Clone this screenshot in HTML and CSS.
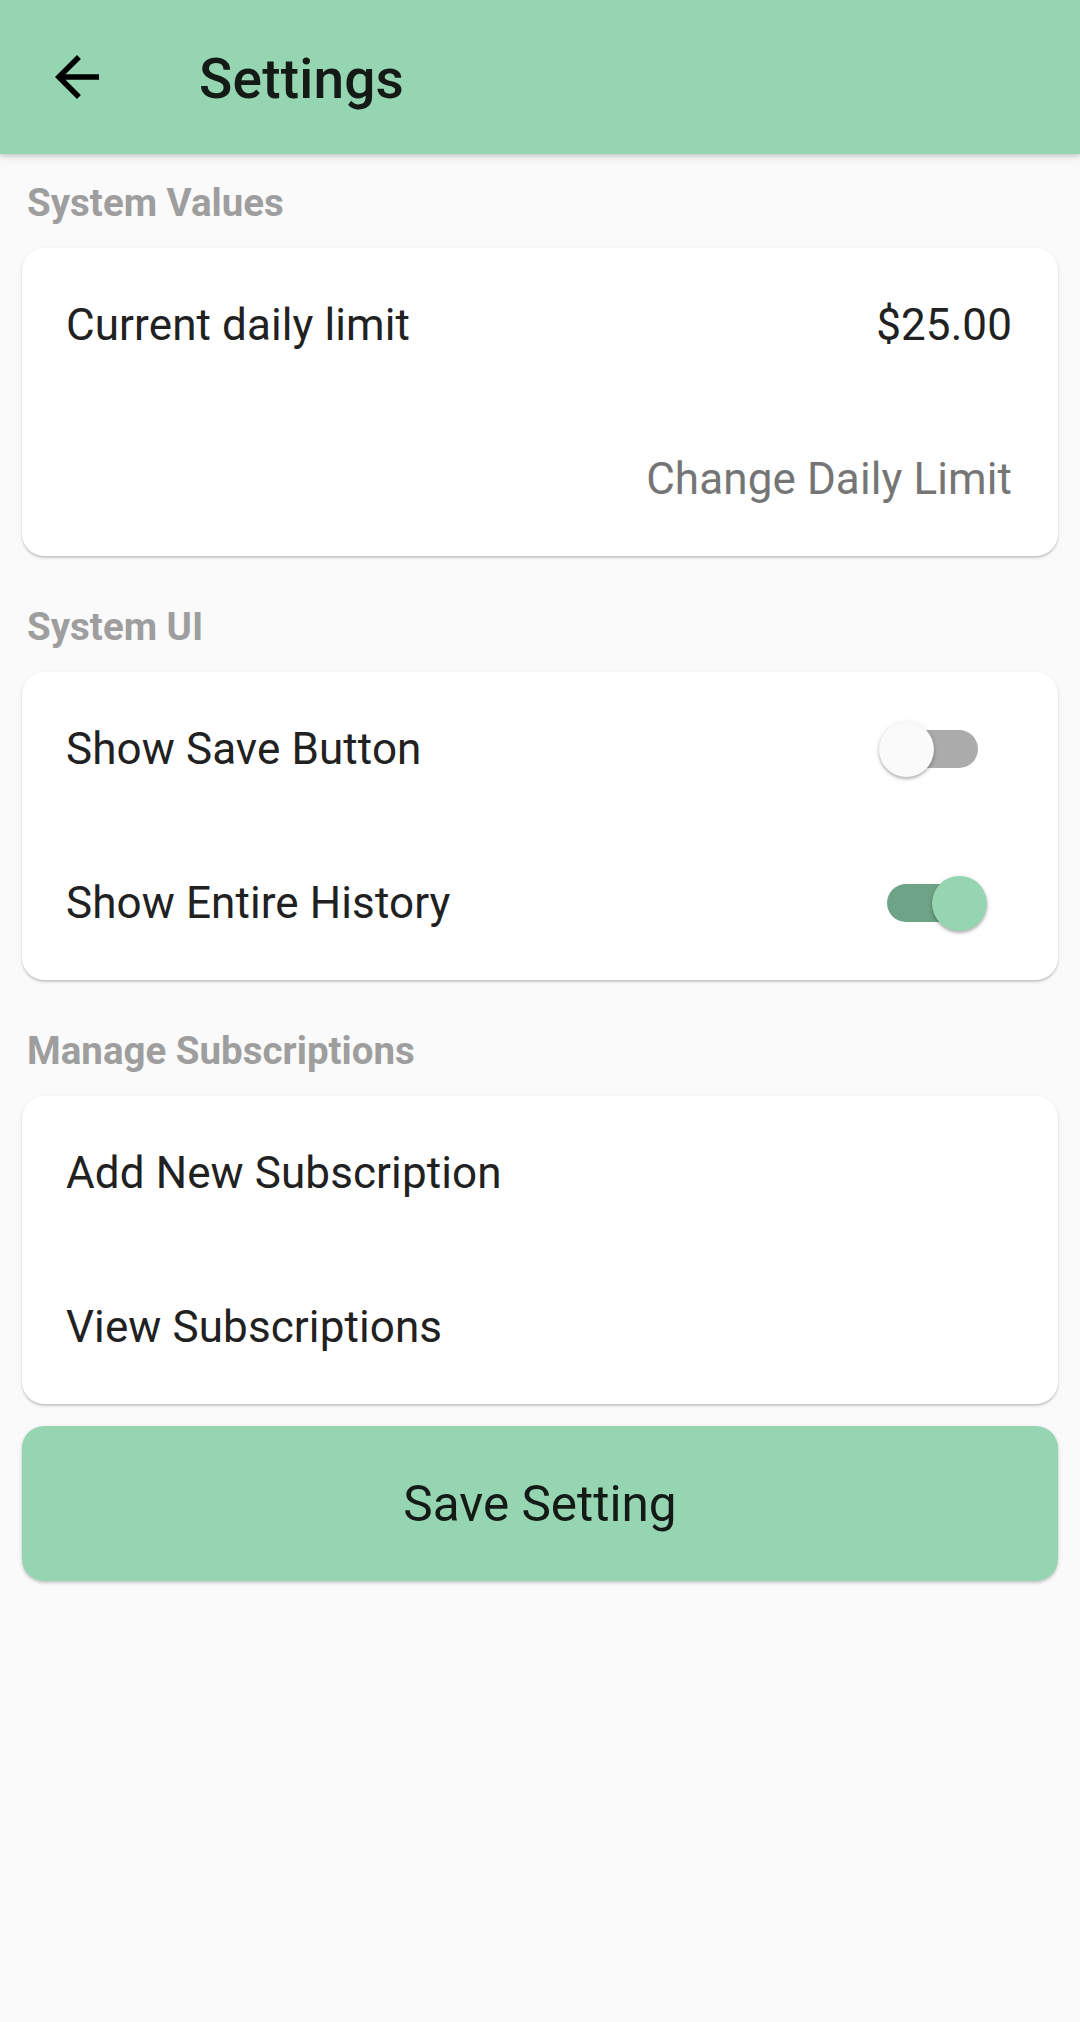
FILE: index.html
```html
<!DOCTYPE html>
<html lang="en">
<head>
<meta charset="utf-8">
<title>Settings</title>
<link rel="stylesheet" href="styles.css">
</head>
<body>
<header class="appbar">
  <div class="appbar-back">
    <svg class="icon-back" viewBox="0 0 24 24" width="66" height="66"><path d="M20 11H7.83l5.59-5.59L12 4l-8 8 8 8 1.41-1.41L7.83 13H20v-2z" fill="#000"/></svg>
  </div>
  <h1 class="appbar-title">Settings</h1>
</header>
<main class="content">
  <h2 class="section-label">System Values</h2>
  <section class="card">
    <div class="row row-value"><span class="row-text">Current daily limit</span><span class="row-text">$25.00</span></div>
    <div class="row row-value row-end"><span class="row-link">Change Daily Limit</span></div>
  </section>

  <h2 class="section-label">System UI</h2>
  <section class="card">
    <div class="row row-switch"><span class="row-text">Show Save Button</span>
      <span class="switch"><span class="switch-track"></span><span class="switch-thumb"></span></span></div>
    <div class="row row-switch"><span class="row-text">Show Entire History</span>
      <span class="switch switch-on"><span class="switch-track"></span><span class="switch-thumb"></span></span></div>
  </section>

  <h2 class="section-label">Manage Subscriptions</h2>
  <section class="card">
    <div class="row"><span class="row-text">Add New Subscription</span></div>
    <div class="row"><span class="row-text">View Subscriptions</span></div>
  </section>

  <button class="save-btn" type="button">Save Setting</button>
</main>
</body>
</html>
```

FILE: styles.css
```css
* { box-sizing: border-box; }
html, body {
  margin: 0;
  padding: 0;
  width: 1080px;
  min-height: 2022px;
  background: #fafafa;
  font-family: Roboto, "Noto Sans", "Liberation Sans", sans-serif;
}
.appbar {
  position: relative;
  z-index: 2;
  height: 154px;
  background: #95d5b2;
  display: flex;
  align-items: center;
  box-shadow: 0 2px 4px rgba(0,0,0,0.14), 0 4px 10px rgba(0,0,0,0.08);
}
.appbar-back {
  width: 66px;
  height: 66px;
  margin-left: 44px;
  display: flex;
}
.icon-back { display: block; }
.appbar-title {
  margin: 0 0 0 89px;
  font-size: 55px;
  font-weight: 500;
  color: #141a16;
  line-height: 1;
  padding-top: 4px;
  letter-spacing: 0.2px;
}
.content {
  padding: 0 22px;
  display: flex;
  flex-direction: column;
}
.section-label {
  margin: 0;
  padding: 26px 0 23px 5px;
  font-size: 38.5px;
  line-height: 45px;
  font-weight: 700;
  color: #9e9e9e;
}
.card {
  background: #fff;
  border-radius: 22px;
  margin-bottom: 22px;
  box-shadow: 0 2px 2px rgba(0,0,0,0.16), 0 1px 4px rgba(0,0,0,0.08);
  display: flex;
  flex-direction: column;
}
.row {
  height: 154px;
  display: flex;
  align-items: center;
  justify-content: space-between;
  padding: 0 46px 0 44px;
}
.row-end { justify-content: flex-end; }
.row-switch { padding-right: 71px; }
.row-text {
  font-size: 44px;
  color: #212121;
  letter-spacing: 0.1px;
}
.row-link {
  font-size: 44px;
  color: #757575;
  letter-spacing: 0.1px;
}
.switch {
  position: relative;
  width: 108px;
  height: 55px;
  flex: none;
}
.switch-track {
  position: absolute;
  left: 8px;
  top: 8.5px;
  width: 91px;
  height: 38px;
  border-radius: 19px;
  background: #ababab;
}
.switch-thumb {
  position: absolute;
  left: 0;
  top: 0;
  width: 55px;
  height: 55px;
  border-radius: 50%;
  background: #fafafa;
  box-shadow: 0 2px 3px rgba(0,0,0,0.25), 0 1px 6px rgba(0,0,0,0.1);
}
.switch-on .switch-track { background: #6fa387; }
.switch-on .switch-thumb { left: 52.5px; background: #95d5b2; }
.save-btn {
  height: 155px;
  width: 100%;
  border: none;
  border-radius: 22px;
  background: #95d5b2;
  font-family: Roboto, "Noto Sans", "Liberation Sans", sans-serif;
  font-size: 49.5px;
  color: #141a16;
  box-shadow: 0 2px 3px rgba(0,0,0,0.16), 0 1px 5px rgba(0,0,0,0.08);
  padding: 0;
}
```
